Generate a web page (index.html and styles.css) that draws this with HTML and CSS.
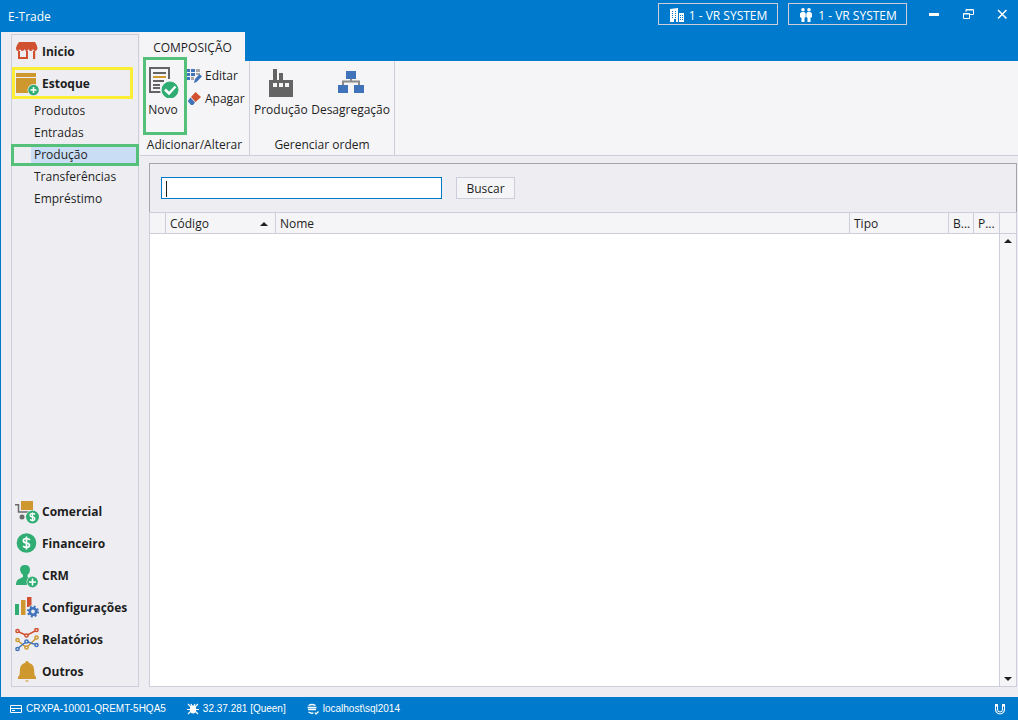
FILE: index.html
```html
<!DOCTYPE html>
<html lang="pt-BR">
<head>
<meta charset="utf-8">
<title>E-Trade</title>
<link rel="stylesheet" href="styles.css">
</head>
<body>
<div class="app">
  <header class="titlebar">
    <h1 class="title">E-Trade</h1>
    <button class="chip company" type="button">
      <svg width="16" height="16" viewBox="0 0 16 16"><path fill="#fff" fill-rule="evenodd" d="M1 1l8-1v14H7v-3H5v3H1zM3 3v1h1V3zm3 0v1h1V3zM3 5v1h1V5zm3 0v1h1V5zM3 7v1h1V7zm3 0v1h1V7zM3 9v1h1V9zm3 0v1h1V9zM10 5h5v9h-5zm1 2v1h1V7zm2 0v1h1V7zm-2 2v1h1V9zm2 0v1h1V9zm-2 2v1h1v-1zm2 0v1h1v-1z"/></svg>
      <span>1 - VR SYSTEM</span>
    </button>
    <button class="chip user" type="button">
      <svg width="16" height="16" viewBox="0 0 16 16"><g fill="#fff"><circle cx="5" cy="1.800" r="1.800"/><circle cx="11" cy="1.800" r="1.800"/><path d="M3.500 4h3l1.200 1.500V9L6.500 10v4h-3v-4L2 9V5.500zM9.500 4h3L14 5.500V9l-1.500 1v4h-3v-4L8.300 9V5.500z"/></g></svg>
      <span>1 - VR SYSTEM</span>
    </button>
    <div class="window-buttons">
      <button type="button" aria-label="Minimizar"><svg width="12" height="12" viewBox="0 0 12 12"><path d="M1 6.500h10" stroke="#fff" stroke-width="3"/></svg></button>
      <button type="button" aria-label="Restaurar"><svg width="12" height="12" viewBox="0 0 12 12"><g fill="none" stroke="#fff"><path d="M4 4V1.500h7.500v5H8M4 2h7M1.500 5.500h6v5h-6zM1 6h7"/></g></svg></button>
      <button type="button" aria-label="Fechar"><svg width="12" height="12" viewBox="0 0 12 12"><path d="M2 2l8.500 8.500M10.500 2L2 10.500" stroke="#fff" stroke-width="1.500"/></svg></button>
    </div>
  </header>

  <div class="workspace">
    <nav class="sidebar">
      <a class="group" href="#inicio">
        <svg width="24" height="24" viewBox="0 0 24 24"><path fill="#d1502f" d="M4 2h16q2 3 2.500 6-.5 3-2.500 3-1.500 0-2-2-.5 2-2.200 2T13.500 9q-.5 2-2 2t-2-2q-.5 2-2.200 2T5 9q-.5 2-2 2Q1 11 1 8q.5-3 3-6zM3 11h2v6h6v-6h2v8H3zM18 11h2.200v8H18z"/></svg>
        <span>Inicio</span>
      </a>
      <a class="group highlighted" href="#estoque">
        <svg width="24" height="24" viewBox="0 0 24 24"><path fill="#ce982f" d="M1 1h20v4H1zM1 6h20v15H1z"/><circle cx="18.500" cy="18" r="6" fill="#eeeef2"/><circle cx="18.500" cy="18" r="5.300" fill="#30ad73"/><path d="M15.500 18h6M18.500 15v6" stroke="#fff" stroke-width="1.500"/></svg>
        <span>Estoque</span>
      </a>
      <ul class="submenu">
        <li><a href="#produtos">Produtos</a></li>
        <li><a href="#entradas">Entradas</a></li>
        <li class="selected"><a href="#producao" aria-current="page">Produção</a></li>
        <li><a href="#transferencias">Transferências</a></li>
        <li><a href="#emprestimo">Empréstimo</a></li>
      </ul>
      <div class="groups-bottom">
        <a class="group" href="#comercial">
          <svg width="24" height="24" viewBox="0 0 24 24"><path fill="#ce982f" d="M6 1h12v9H6z"/><path d="M0 4.700h3.500V12H16" fill="none" stroke="#6a6a6a" stroke-width="1.500"/><circle cx="7" cy="17" r="2.500" fill="#6a6a6a"/><circle cx="17.500" cy="17" r="7" fill="#eeeef2"/><circle cx="17.500" cy="17" r="6.500" fill="#30ad73"/><path d="M20 14.500q-1-1-2.500-1c-3.500 0-3 3.200 0 3.500s3 3.500 0 3.500q-1.500 0-2.500-1M17.500 12.500v9" fill="none" stroke="#fff" stroke-width="1.300"/></svg>
          <span>Comercial</span>
        </a>
        <a class="group" href="#financeiro">
          <svg width="24" height="24" viewBox="0 0 24 24"><circle cx="11.500" cy="11" r="9.800" fill="#30ad73"/><path d="M15 7.800q-1.500-1.300-3.500-1.300c-4.500 0-4 4.200 0 4.500s4 4.500 0 4.500q-2 0-3.500-1.300M11.500 4.500v13" fill="none" stroke="#fff" stroke-width="1.700"/></svg>
          <span>Financeiro</span>
        </a>
        <a class="group" href="#crm">
          <svg width="24" height="24" viewBox="0 0 24 24"><path fill="#30ad73" d="M10 1q5 0 5 5 0 3-2.500 5v2l3 2-4 6H1q0-5 3-6l4-2v-2Q5.500 9 5 6q0-5 5-5z"/><circle cx="17.500" cy="18" r="6" fill="#eeeef2"/><circle cx="17.500" cy="18" r="5.400" fill="#30ad73"/><path d="M14 18h7M17.500 14.500v7" stroke="#fff" stroke-width="1.600"/></svg>
          <span>CRM</span>
        </a>
        <a class="group" href="#configuracoes">
          <svg width="24" height="24" viewBox="0 0 24 24"><path fill="#30ad73" d="M0 8h4v11H0z"/><path fill="#ce982f" d="M6 4h4.500v15H6z"/><path fill="#d1502f" d="M12 1h4.500v10H12z"/><circle cx="18" cy="15.500" r="6.500" fill="#eeeef2"/><circle cx="18" cy="15.500" r="5" fill="none" stroke="#4073ba" stroke-width="2" stroke-dasharray="2 1.930"/><circle cx="18" cy="15.500" r="3.200" fill="none" stroke="#4073ba" stroke-width="2.600"/></svg>
          <span>Configurações</span>
        </a>
        <a class="group" href="#relatorios">
          <svg width="24" height="24" viewBox="0 0 24 24"><g fill="#eeeef2" stroke-width="1.500"><g stroke="#d1502f"><path fill="none" d="M2 3l9.500 4.500L22 2"/><circle cx="2.500" cy="3" r="1.600"/><circle cx="11.500" cy="7.500" r="1.600"/><circle cx="21.500" cy="2" r="1.600"/></g><g stroke="#ce982f"><path fill="none" d="M2 12l9.500 7.500L22 9.500"/><circle cx="2.500" cy="12" r="1.600"/><circle cx="11.500" cy="19.500" r="1.600"/><circle cx="21.500" cy="9.500" r="1.600"/></g><g stroke="#4073ba"><path fill="none" d="M2 21l9.500-7.500L22 17"/><circle cx="2.500" cy="21" r="1.600"/><circle cx="11.500" cy="13.500" r="1.600"/><circle cx="21.500" cy="17" r="1.600"/></g></g></svg>
          <span>Relatórios</span>
        </a>
        <a class="group" href="#outros">
          <svg width="24" height="24" viewBox="0 0 24 24"><path fill="#ce982f" d="M12 1q1.500 0 2 2 4.500 1 5 6l.5 6 1.500 2v2H3v-2l1.500-2L5 9q.5-5 5-6 .5-2 2-2zM10 20.500h4q-2 2.500-4 0z"/></svg>
          <span>Outros</span>
        </a>
      </div>
    </nav>

    <main class="main">
      <div class="tabs"><button class="tab" type="button">COMPOSIÇÃO</button></div>
      <div class="ribbon">
        <section class="ribbon-group edit-group">
          <div class="tools">
            <button class="tool-large new-tool" type="button">
              <svg width="32" height="32" viewBox="0 0 32 32"><path d="M22 13V2H3v24h12" fill="none" stroke="#646464" stroke-width="2"/><path d="M6 7h13M6 15h11M6 19h7M6 22h7" stroke="#646464" stroke-width="2"/><path d="M6 11h13" stroke="#ce982f" stroke-width="2"/><circle cx="23" cy="24" r="10" fill="#f5f5f7"/><circle cx="23" cy="24" r="8" fill="#30ad73" stroke="#30ad73"/><path d="M18 23.500l4 4 6.500-7" fill="none" stroke="#fff" stroke-width="2.500"/></svg>
              <span>Novo</span>
            </button>
            <div class="small-tools">
              <button class="tool-small" type="button">
                <svg width="16" height="16" viewBox="0 0 16 16"><path fill="#4073ba" d="M0 1h4v3H0zM5 1h4v3H5zM0 5h4v3H0zM5 5h4v3H5zM1 9h3v3H1z"/><path fill="#a8a8a8" d="M10 1h4v3h-4zM10 5h4v2h-4zM5 9h3v3H5z"/><path fill="#4073ba" d="M13.500 6L16 8.500 10.500 14 8 15l1-4z"/></svg>
                <span>Editar</span>
              </button>
              <button class="tool-small" type="button">
                <svg width="16" height="16" viewBox="0 0 16 16"><path fill="#d1502f" d="M9.500 1L15 6l-5.500 5L5 6z"/><path fill="#4073ba" d="M4.500 6.500L9 11.500 7 14H5l-3-3.500v-1z"/></svg>
                <span>Apagar</span>
              </button>
            </div>
          </div>
          <h2 class="group-name">Adicionar/Alterar</h2>
        </section>
        <section class="ribbon-group order-group">
          <div class="tools">
            <button class="tool-large" type="button">
              <svg width="32" height="32" viewBox="0 0 32 32"><path fill="#646464" fill-rule="evenodd" d="M4 30V13h4V2h4v11h2V6h4v7h10v17zM8 16v4h4v-4zm6 0v4h4v-4zm6 0v4h4v-4z"/></svg>
              <span>Produção</span>
            </button>
            <button class="tool-large" type="button">
              <svg width="32" height="32" viewBox="0 0 32 32"><path d="M16 11v4M8 19v-4.500h16V19" fill="none" stroke="#8a8a8a" stroke-width="2"/><path fill="#4073ba" d="M11 4h10v8H11zM3 18h10v8H3zM19 18h10v8H19z"/></svg>
              <span>Desagregação</span>
            </button>
          </div>
          <h2 class="group-name">Gerenciar ordem</h2>
        </section>
      </div>

      <div class="panel">
        <form class="search">
          <input class="search-box" type="text" aria-label="Pesquisar" autofocus>
          <button class="search-button" type="button">Buscar</button>
        </form>
        <table class="grid">
          <colgroup><col class="c-mark"><col class="c-code"><col><col class="c-type"><col class="c-short"><col class="c-last"><col class="c-scroll"></colgroup>
          <thead>
            <tr>
              <th></th>
              <th><div class="sorted"><span>Código</span><svg width="8" height="4" viewBox="0 0 8 4"><path d="M0 4l4-4 4 4z" fill="#1e1e1e"/></svg></div></th>
              <th>Nome</th><th>Tipo</th><th>B...</th><th>P...</th><th></th>
            </tr>
          </thead>
        </table>
        <div class="rows">
          <div class="scrollbar">
            <button type="button" aria-label="Rolar para cima"><svg width="8" height="4" viewBox="0 0 8 4"><path d="M0 4l4-4 4 4z" fill="#1e1e1e"/></svg></button>
            <button type="button" aria-label="Rolar para baixo"><svg width="8" height="4" viewBox="0 0 8 4"><path d="M0 0l4 4 4-4z" fill="#1e1e1e"/></svg></button>
          </div>
        </div>
      </div>
    </main>
  </div>

  <footer class="statusbar">
    <div class="status-item machine"><svg width="12" height="12" viewBox="0 0 12 12"><path d="M.5 2.500h11v7H.5zM0 5.500h12M2 7.500h3" fill="none" stroke="#fff"/></svg><span>CRXPA-10001-QREMT-5HQA5</span></div>
    <div class="status-item version"><svg width="12" height="12" viewBox="0 0 12 12"><ellipse cx="6" cy="6.500" rx="3.200" ry="4" fill="#fff"/><path d="M1 1l3 3M11 1L8 4M0 6.500h12M1 11l3-3M11 11L8 8M4 1l1 2M8 1L7 3" stroke="#fff" stroke-width="1.200"/></svg><span>32.37.281 [Queen]</span></div>
    <div class="status-item"><svg width="12" height="12" viewBox="0 0 12 12"><path d="M1.500 2.500q3.500-2 7 0M.5 4.500h9M1 6.500h8M1.500 9q3 2 5 .8M8 9.500l1 1.500 2.500-2.500" fill="none" stroke="#fff" stroke-width="1.300"/></svg><span>localhost\sql2014</span></div>
    <svg class="magnet" width="12" height="12" viewBox="0 0 12 12"><path d="M2.500 1v5.500a3.500 3.500 0 0 0 7 0V1" fill="none" stroke="#fff" stroke-width="3"/><path d="M2.500 3.500v3a3.500 3.500 0 0 0 7 0v-3" fill="none" stroke="#007acc"/></svg>
  </footer>
</div>
</body>
</html>
```
FILE: styles.css
```css
*,
*::before {
  box-sizing: border-box;
}

body {
  margin: 0;
  font-family: "Open Sans", "Noto Sans", sans-serif;
  font-size: 12px;
  line-height: 16px;
  color: #1e1e1e;
}

button {
  margin: 0;
  padding: 0;
  border: 0;
  background: none;
  font: inherit;
  color: inherit;
}

a {
  color: inherit;
  text-decoration: none;
}

svg {
  display: block;
  flex: none;
}

.app {
  display: flex;
  flex-direction: column;
  min-height: 100vh;
  border-left: 1px solid #007acc;
  background: #eeeef2;
}

.titlebar {
  display: flex;
  align-items: flex-start;
  height: 32px;
  padding: 3px 10px 0 7px;
  background: #007acc;
  color: #fff;
}

.title {
  flex: 1;
  margin: 0;
  padding-top: 6px;
  font-size: 12px;
  font-weight: 400;
}

.chip {
  display: flex;
  align-items: center;
  justify-content: center;
  gap: 4px;
  width: 120px;
  height: 22px;
  padding-top: 3px;
  margin-right: 10px;
  border: 1px solid #cccedb;
}

.user {
  width: 119px;
}

.window-buttons {
  display: flex;
  gap: 22px;
  padding: 5px 0 0 11px;
}

.workspace {
  display: flex;
  flex: 1;
}

.sidebar {
  display: flex;
  flex-direction: column;
  width: 128px;
  margin: 2px 1px 10px 10px;
  border: 1px solid #cccedb;
}

.group {
  display: flex;
  align-items: center;
  gap: 3px;
  height: 32px;
  padding: 1px 0 0 3px;
  font-weight: 700;
}

.highlighted {
  margin-right: 5px;
  padding-left: 0;
  border: 3px solid #fbee34;
}

.submenu {
  margin: 1px -1px 0;
  padding: 0;
  list-style: none;
}

.submenu a {
  display: block;
  height: 22px;
  padding: 3px 0 3px 23px;
}

.selected {
  border: 3px solid #55c07a;
}

.selected a {
  height: 16px;
  margin-left: 17px;
  padding: 0 0 0 3px;
  background: #c9def5;
}

.groups-bottom {
  margin-top: auto;
}

.groups-bottom .group {
  padding-top: 3px;
}

.main {
  display: flex;
  flex: 1;
  flex-direction: column;
  min-width: 0;
}

.tabs {
  display: flex;
  height: 29px;
  background: #007acc;
}

.tab {
  width: 105px;
  padding-top: 2px;
  background: #f5f5f7;
}

.ribbon {
  display: flex;
  height: 95px;
  border-bottom: 1px solid #cccedb;
  background: #f5f5f7;
}

.ribbon-group {
  display: flex;
  flex-direction: column;
  justify-content: space-between;
  border-right: 1px solid #cccedb;
}

.edit-group {
  position: relative;
  width: 110px;
}

.edit-group::before {
  content: "";
  position: absolute;
  top: -4px;
  left: 3px;
  width: 44px;
  height: 78px;
  border: 3px solid #55c07a;
}

.order-group {
  width: 145px;
}

.tools {
  display: flex;
}

.tool-large {
  display: flex;
  flex-direction: column;
  align-items: center;
  gap: 3px;
  padding-top: 6px;
}

.order-group .tools {
  justify-content: space-between;
  padding: 0 4px;
}

.new-tool {
  width: 46px;
  padding-top: 5px;
  gap: 4px;
}

.small-tools {
  display: flex;
  flex-direction: column;
  gap: 7px;
  padding-top: 7px;
}

.tool-small {
  display: flex;
  align-items: center;
  gap: 3px;
}

.group-name {
  margin: 0;
  padding-bottom: 2px;
  font-size: 12px;
  font-weight: 400;
  text-align: center;
}

.panel {
  display: flex;
  flex: 1;
  flex-direction: column;
  margin: 7px 1px 10px 9px;
}

.search {
  display: flex;
  align-items: flex-start;
  gap: 14px;
  height: 49px;
  padding: 13px 11px;
  border: 1px solid #a5a6ab;
  border-bottom: 0;
}

.search-box {
  width: 281px;
  height: 22px;
  padding: 0 4px;
  border: 1px solid #007acc;
  border-radius: 0;
  outline: 0;
  background: #fff;
  caret-color: transparent;
  font: inherit;
}

.search-box:focus {
  background: linear-gradient(#1e1e1e, #1e1e1e) 4px 3px / 1px 16px no-repeat #fff;
}

.search-button {
  width: 59px;
  height: 22px;
  padding-top: 1px;
  border: 1px solid #cccedb;
  background: #f5f5f7;
}

.grid {
  width: 100%;
  table-layout: fixed;
  border-collapse: collapse;
  background: #f5f5f7;
}

.grid th {
  height: 21px;
  padding: 2px 4px 0;
  border: 1px solid #cccedb;
  font-weight: 400;
  text-align: left;
  white-space: nowrap;
}

.c-mark {
  width: 16px;
}

.c-code {
  width: 110px;
}

.c-type {
  width: 99px;
}

.c-short {
  width: 25px;
}

.c-last {
  width: 26px;
}

.c-scroll {
  width: 17px;
}

.sorted {
  display: flex;
  align-items: center;
  justify-content: space-between;
  padding-right: 3px;
}

.rows {
  display: flex;
  flex: 1;
  justify-content: flex-end;
  border: 1px solid #cccedb;
  border-top: 0;
  background: #fff;
}

.scrollbar {
  display: flex;
  flex-direction: column;
  justify-content: space-between;
  width: 17px;
  padding: 5px 0 5px;
  border-left: 1px solid #cccedb;
  background: #f5f5f7;
}

.scrollbar button {
  display: flex;
  justify-content: center;
}

.statusbar {
  display: flex;
  align-items: center;
  height: 23px;
  padding: 0 12px 0 9px;
  background: #007acc;
  color: #fff;
  font-family: "Liberation Sans", Arial, sans-serif;
  font-size: 10px;
}

.status-item {
  display: flex;
  align-items: center;
  gap: 4px;
  margin-right: 21px;
}

.magnet {
  margin-left: auto;
}
```
